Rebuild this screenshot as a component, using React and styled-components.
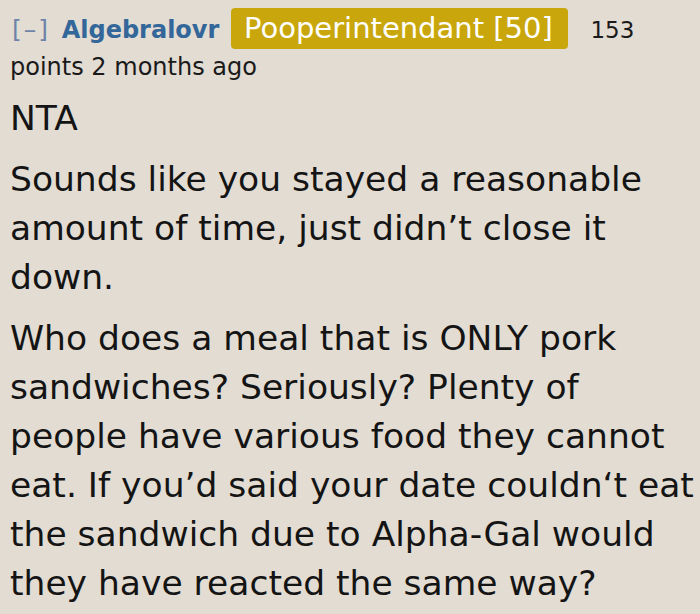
import styled, { createGlobalStyle } from "styled-components";

const GlobalStyle = createGlobalStyle`
  html, body {
    margin: 0;
    padding: 0;
    background: #e2dcd3;
  }
  body {
    font-family: "DejaVu Sans", Verdana, sans-serif;
    color: #141414;
  }
`;

const comment = {
  author: "Algebralovr",
  flair: "Pooperintendant [50]",
  score: 153,
  age: "2 months ago",
  body: [
    "NTA",
    "Sounds like you stayed a reasonable amount of time, just didn\u2019t close it down.",
    "Who does a meal that is ONLY pork sandwiches? Seriously? Plenty of people have various food they cannot eat. If you\u2019d said your date couldn\u2018t eat the sandwich due to Alpha-Gal would they have reacted the same way?",
  ],
};

export default function App() {
  return (
    <Wrapper>
      <GlobalStyle />
      <Tagline>
        <Toggle>[–]</Toggle> <Author>{comment.author}</Author>{" "}
        <Flair>{comment.flair}</Flair> <Score>{comment.score}</Score> points{" "}
        {comment.age}
      </Tagline>
      <Body>
        {comment.body.map((p, i) => (
          <Paragraph key={i}>{p}</Paragraph>
        ))}
      </Body>
    </Wrapper>
  );
}

const Wrapper = styled.div`
  padding: 0 4px 0 10px;
`;

const Tagline = styled.div`
  font-size: 24px;
  line-height: 36px;
  padding-top: 8px;
  color: #1a1a1a;
`;

const Toggle = styled.span`
  display: inline-block;
  color: #6e83a8;
  font-size: 25px;
  letter-spacing: 2px;
  margin: 0 4px 0 2px;
`;

const Author = styled.span`
  color: #336699;
  font-weight: bold;
  margin-right: 4px;
`;

const Flair = styled.span`
  display: inline-block;
  background: #c9a70c;
  color: #fff;
  font-size: 29px;
  line-height: 41px;
  padding: 0 15px 0 13px;
  border-radius: 4px;
  margin-right: 15px;
`;

const Score = styled.span`
  font-size: 23px;
`;

const Body = styled.div`
  display: flex;
  flex-direction: column;
  gap: 12px;
  padding-top: 9px;
`;

const Paragraph = styled.p`
  margin: 0;
  font-size: 34.5px;
  line-height: 49px;
`;
